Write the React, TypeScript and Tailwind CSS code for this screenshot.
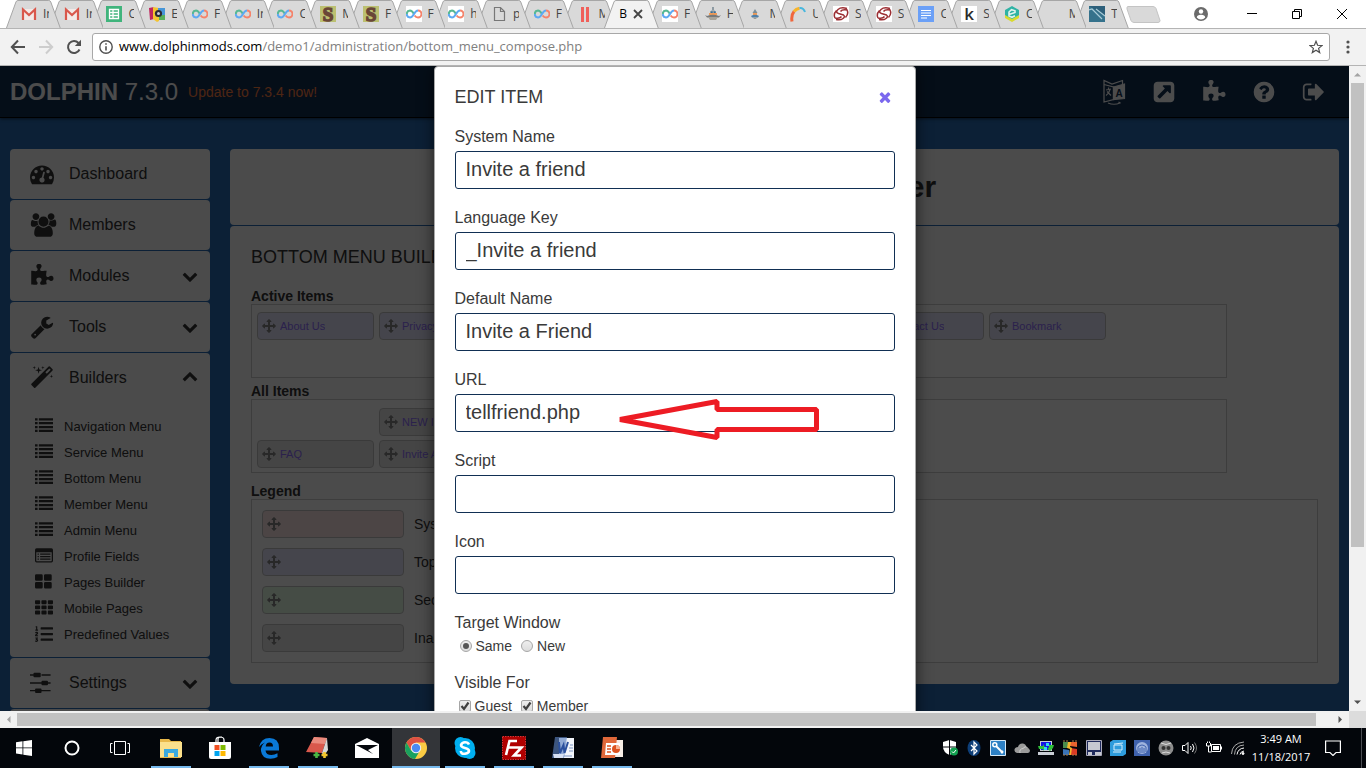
import { useState } from "react";
import type { ReactNode } from "react";
import { FaListOl } from "react-icons/fa";

/* ---------- icon paths (1792 unit grid) ---------- */

const PATHS = {
  tachometer:
    "M384 1152q0-53-37.5-90.5t-90.5-37.5-90.5 37.5-37.5 90.5 37.5 90.5 90.5 37.5 90.5-37.5 37.5-90.5zm192-448q0-53-37.5-90.5t-90.5-37.5-90.5 37.5-37.5 90.5 37.5 90.5 90.5 37.5 90.5-37.5 37.5-90.5zm428 481l101-382q6-26-7.5-48.5t-38.5-29.5-48 6.5-30 39.5l-101 382q-60 5-107 43.5t-63 98.5q-20 77 20 146t117 89 146-20 89-117q16-60-6-117t-72-91zm660-33q0-53-37.5-90.5t-90.5-37.5-90.5 37.5-37.5 90.5 37.5 90.5 90.5 37.5 90.5-37.5 37.5-90.5zm-640-640q0-53-37.5-90.5t-90.5-37.5-90.5 37.5-37.5 90.5 37.5 90.5 90.5 37.5 90.5-37.5 37.5-90.5zm448 192q0-53-37.5-90.5t-90.5-37.5-90.5 37.5-37.5 90.5 37.5 90.5 90.5 37.5 90.5-37.5 37.5-90.5zm320 448q0 261-141 483-19 29-54 29h-1402q-35 0-54-29-141-221-141-483 0-182 71-348t191-286 286-191 348-71 348 71 286 191 191 286 71 348z",
  users:
    "M657 896q-162 5-265 128h-134q-82 0-138-40.5t-56-118.5q0-353 124-353 6 0 43.5 21t97.5 42.5 119 21.5q67 0 133-23-5 37-5 66 0 159 93 293zm1071 637q0 120-73 189.5t-194 69.5h-874q-121 0-194-69.5t-73-189.5q0-53 3.5-103.5t14-109 26.5-108.5 43-97.5 62-81 85.5-53.5 111.5-20q10 0 43 21.5t73 48 107 48 135 21.5 135-21.5 107-48 73-48 43-21.5q61 0 111.5 20t85.5 53.5 62 81 43 97.5 26.5 108.5 14 109 3.5 103.5zm-1024-1277q0 106-75 181t-181 75-181-75-75-181 75-181 181-75 181 75 75 181zm704 384q0 159-112.5 271.5t-271.5 112.5-271.5-112.5-112.5-271.5 112.5-271.5 271.5-112.5 271.5 112.5 112.5 271.5zm576 225q0 78-56 118.5t-138 40.5h-134q-103-123-265-128 93-134 93-293 0-29-5-66 66 23 133 23 59 0 119-21.5t97.5-42.5 43.5-21q124 0 124 353zm-128-609q0 106-75 181t-181 75-181-75-75-181 75-181 181-75 181 75 75 181z",
  puzzle:
    "M1755 1083q0 81-44.5 135t-123.5 54q-41 0-77.5-17.5t-59-38-56.5-38-71-17.5q-110 0-110 124 0 39 16 115t15 115v5q-22 0-33 1-34 3-97.5 11.5t-115.5 13.5-98 5q-61 0-103-26.5t-42-83.5q0-37 17.5-71t38-56.5 38-59 17.5-77.5q0-79-54-123.5t-135-44.5q-84 0-143 45.5t-59 127.5q0 43 15 83t33.5 64.5 33.5 53 15 50.5q0 45-46 89-37 35-117 35-95 0-245-24-9-2-27.5-4t-27.5-4l-13-2q-1 0-3-1-2 0-2-1v-1024q2 1 17.5 3.5t34 5 21.5 3.5q150 24 245 24 80 0 117-35 46-44 46-89 0-22-15-50.5t-33.5-53-33.5-64.5-15-83q0-82 59-127.5t144-45.5q80 0 134 44.5t54 123.5q0 41-17.5 77.5t-38 59-38 56.5-17.5 71q0 57 42 83.5t103 26.5q64 0 180-15t163-17v2q-1 2-3.5 17.5t-5 34-3.5 21.5q-24 150-24 245 0 80 35 117 44 46 89 46 22 0 50.5-15t53-33.5 64.5-33.5 83-15q82 0 127.5 59t45.5 143z",
  wrench:
    "M448 1472q0-26-19-45t-45-19-45 19-19 45 19 45 45 19 45-19 19-45zm644-420l-682 682q-37 37-90 37-52 0-91-37l-106-108q-38-36-38-90 0-53 38-91l681-681q39 98 114.5 173.5t173.5 114.5zm634-435q0 39-23 106-47 134-164.5 217.5t-258.5 83.5q-185 0-316.5-131.5t-131.5-316.5 131.5-316.5 316.5-131.5q58 0 121.5 16.5t107.5 46.5q16 11 16 28t-16 28l-293 169v224l193 107q5-3 79-48.5t135.5-81 70.5-35.5q15 0 23.5 10t8.5 25z",
  magic:
    "M1254 581l293-293-107-107-293 293zm447-293q0 27-18 45l-1286 1286q-18 18-45 18t-45-18l-198-198q-18-18-18-45t18-45l1286-1286q18-18 45-18t45 18l198 198q18 18 18 45zm-1351-190l98 30-98 30-30 98-30-98-98-30 98-30 30-98zm350 162l196 60-196 60-60 196-60-196-196-60 196-60 60-196zm930 478l98 30-98 30-30 98-30-98-98-30 98-30 30-98zm-640-640l98 30-98 30-30 98-30-98-98-30 98-30 30-98z",
  sliders:
    "M0 240h260v110h-260zM860 240h676v110h-676zM330 128h400q70 0 70 60v214q0 60-70 60h-400q-70 0-70-60v-214q0-60 70-60zM0 841h860v110h-860zM1340 841h196v110h-196zM930 726h340q70 0 70 60v214q0 60-70 60h-340q-70 0-70-60v-214q0-60 70-60zM0 1410h380v110h-380zM860 1410h676v110h-676zM450 1310h340q70 0 70 60v214q0 60-70 60h-340q-70 0-70-60v-214q0-60 70-60z",
  chevronDown:
    "M1683 808l-742 741q-19 19-45 19t-45-19l-742-741q-19-19-19-45.5t19-45.5l166-165q19-19 45-19t45 19l531 531 531-531q19-19 45-19t45 19l166 165q19 19 19 45.5t-19 45.5z",
  arrows:
    "M1792 896q0 26-19 45l-256 256q-19 19-45 19t-45-19-19-45v-128h-384v384h128q26 0 45 19t19 45-19 45l-256 256q-19 19-45 19t-45-19l-256-256q-19-19-19-45t19-45 45-19h128v-384h-384v128q0 26-19 45t-45 19-45-19l-256-256q-19-19-19-45t19-45l256-256q19-19 45-19t45 19 19 45v128h384v-384h-128q-26 0-45-19t-19-45 19-45l256-256q19-19 45-19t45 19l256 256q19 19 19 45t-19 45-45 19h-128v384h384v-128q0-26 19-45t45-19 45 19l256 256q19 19 19 45z",
  times:
    "M1490 1322q0 40-28 68l-136 136q-28 28-68 28t-68-28l-294-294-294 294q-28 28-68 28t-68-28l-136-136q-28-28-28-68t28-68l294-294-294-294q-28-28-28-68t28-68l136-136q28-28 68-28t68 28l294 294 294-294q28-28 68-28t68 28l136 136q28 28 28 68t-28 68l-294 294 294 294q28 28 28 68z",
  question:
    "M1024 1376v-192q0-14-9-23t-23-9h-192q-14 0-23 9t-9 23v192q0 14 9 23t23 9h192q14 0 23-9t9-23zm256-672q0-88-55.5-163t-138.5-116-170-41q-243 0-371 213-15 24 8 42l132 100q7 6 19 6 16 0 25-12 53-68 86-92 34-24 86-24 48 0 85.5 26t37.5 59q0 38-20 61t-68 45q-63 28-115.5 86.5t-52.5 125.5v36q0 14 9 23t23 9h192q14 0 23-9t9-23q0-19 21.5-49.5t54.5-49.5q32-18 49-28.5t46-35 44.5-48 28-60.5 12.5-81zm384 192q0 209-103 385.5t-279.5 279.5-385.5 103-385.5-103-279.5-279.5-103-385.5 103-385.5 279.5-279.5 385.5-103 385.5 103 279.5 279.5 103 385.5z",
  external:
    "M1408 928v-480q0-26-19-45t-45-19h-480q-42 0-59 39-17 41 14 70l144 144-534 534q-19 19-19 45t19 45l102 102q19 19 45 19t45-19l534-534 144 144q18 19 45 19 12 0 25-5 39-17 39-59zm256-512v960q0 119-84.5 203.5t-203.5 84.5h-960q-119 0-203.5-84.5t-84.5-203.5v-960q0-119 84.5-203.5t203.5-84.5h960q119 0 203.5 84.5t84.5 203.5z",
  signOut:
    "M704 1440q0 4 1 20t.5 26.5-3 23.5-10 19.5-20.5 6.5h-320q-119 0-203.5-84.5t-84.5-203.5v-704q0-119 84.5-203.5t203.5-84.5h320q13 0 22.5 9.5t9.5 22.5q0 4 1 20t.5 26.5-3 23.5-10 19.5-20.5 6.5h-320q-66 0-113 47t-47 113v704q0 66 47 113t113 47h312l11.5 1 11.5 3 8 5.5 7 9 2 13.5zm928-544q0 26-19 45l-544 544q-19 19-45 19t-45-19-19-45v-288h-448q-26 0-45-19t-19-45v-384q0-26 19-45t45-19h448v-288q0-26 19-45t45-19 45 19l544 544q19 19 19 45z",
  list: "M0 128h256v220h-256zM0 510h256v220h-256zM0 892h256v220h-256zM0 1274h256v220h-256zM384 128h1408v220h-1408zM384 510h1408v220h-1408zM384 892h1408v220h-1408zM384 1274h1408v220h-1408z",
  listAlt:
    "M160 128h1472q160 0 160 160v1088q0 160-160 160h-1472q-160 0-160-160v-1088q0-160 160-160zM128 512v864q0 32 32 32h1472q32 0 32-32v-864zM256 640h128v128h-128zM256 896h128v128h-128zM256 1152h128v128h-128zM512 640h1024v128h-1024zM512 896h1024v128h-1024zM512 1152h1024v128h-1024z",
  thLarge:
    "M128 128h512q128 0 128 128v384q0 128-128 128h-512q-128 0-128-128v-384q0-128 128-128zM1024 128h512q128 0 128 128v384q0 128-128 128h-512q-128 0-128-128v-384q0-128 128-128zM128 896h512q128 0 128 128v384q0 128-128 128h-512q-128 0-128-128v-384q0-128 128-128zM1024 896h512q128 0 128 128v384q0 128-128 128h-512q-128 0-128-128v-384q0-128 128-128z",
  th: "M80 128h352q80 0 80 80v224q0 80-80 80h-352q-80 0-80-80v-224q0-80 80-80zM720 128h352q80 0 80 80v224q0 80-80 80h-352q-80 0-80-80v-224q0-80 80-80zM1360 128h352q80 0 80 80v224q0 80-80 80h-352q-80 0-80-80v-224q0-80 80-80zM80 640h352q80 0 80 80v224q0 80-80 80h-352q-80 0-80-80v-224q0-80 80-80zM720 640h352q80 0 80 80v224q0 80-80 80h-352q-80 0-80-80v-224q0-80 80-80zM1360 640h352q80 0 80 80v224q0 80-80 80h-352q-80 0-80-80v-224q0-80 80-80zM80 1152h352q80 0 80 80v224q0 80-80 80h-352q-80 0-80-80v-224q0-80 80-80zM720 1152h352q80 0 80 80v224q0 80-80 80h-352q-80 0-80-80v-224q0-80 80-80zM1360 1152h352q80 0 80 80v224q0 80-80 80h-352q-80 0-80-80v-224q0-80 80-80z",
};

type IconName = keyof typeof PATHS;

function Icon({ name, className }: { name: IconName; className: string }) {
  return (
    <svg
      viewBox={name === "users" ? "0 0 2048 1792" : "0 0 1792 1792"}
      className={`shrink-0 ${className}`}
      fill="currentColor"
      fillRule={name === "listAlt" ? "evenodd" : "nonzero"}
      aria-hidden="true"
    >
      <path d={PATHS[name]} />
    </svg>
  );
}

function LanguageIcon() {
  return (
    <svg viewBox="0 0 24 26" className="h-[26px] w-6" fill="none" stroke="currentColor" strokeWidth="1.2" aria-hidden="true">
      <path d="M2 5.500L11.500 8v12.500L2 23zM2 5.500v-4l8 3.500L20.500 1.500v4" />
      <path d="M11.500 8L22.500 5v14.500L11.500 20.500z" fill="currentColor" />
      <path d="M4 11l5-1M6.500 8.500v2M8 10.500q-1 4-4 6M5 12.500l4 4M6 24q6 2.500 12 0l-1.500-1" />
      <text x="13.500" y="17.500" fontSize="10" fontWeight="bold" stroke="none" fill="#112f53" fontFamily="Liberation Sans, sans-serif">
        A
      </text>
    </svg>
  );
}

/* ---------- browser tabs ---------- */

type Favicon =
  | "gmail"
  | "sheets"
  | "camera"
  | "loop"
  | "loopWhite"
  | "serif"
  | "file"
  | "bars"
  | "boat"
  | "boatSmall"
  | "arc"
  | "swirl"
  | "docs"
  | "k"
  | "hex"
  | "teal"
  | "none";

const TABS: { icon: Favicon; title: string; active?: boolean }[] = [
  { icon: "gmail", title: "In" },
  { icon: "gmail", title: "In" },
  { icon: "sheets", title: "C" },
  { icon: "camera", title: "E" },
  { icon: "loop", title: "F" },
  { icon: "loop", title: "In" },
  { icon: "loop", title: "C" },
  { icon: "serif", title: "M" },
  { icon: "serif", title: "F" },
  { icon: "loopWhite", title: "F" },
  { icon: "loopWhite", title: "h" },
  { icon: "file", title: "p" },
  { icon: "loop", title: "F" },
  { icon: "bars", title: "M" },
  { icon: "none", title: "B", active: true },
  { icon: "loopWhite", title: "F" },
  { icon: "boat", title: "H" },
  { icon: "boatSmall", title: "M" },
  { icon: "arc", title: "U" },
  { icon: "swirl", title: "S" },
  { icon: "swirl", title: "S" },
  { icon: "docs", title: "C" },
  { icon: "k", title: "S" },
  { icon: "hex", title: "C" },
  { icon: "none", title: "M" },
  { icon: "teal", title: "T" },
];

function Loop() {
  return (
    <g fill="none" strokeWidth="2">
      <path d="M8 8Q6 4.500 4 4.500A3.500 3.500 0 0 0 .8 8" stroke="#57b894" />
      <path d="M.8 8A3.500 3.500 0 0 0 4 11.500Q6 11.500 8 8Q10 4.500 12 4.500" stroke="#5ea9f2" />
      <path d="M12 4.500A3.500 3.500 0 0 1 12 11.500Q10 11.500 8.600 9.500" stroke="#f5836b" />
    </g>
  );
}

const FAVICONS: Record<Favicon, ReactNode> = {
  gmail: (
    <g>
      <path d="M1 3h14v11H1z" fill="#f3e9e7" />
      <path d="M2 14V3.500l6 5.500 6-5.500V14" fill="none" stroke="#d9574b" strokeWidth="2.200" />
    </g>
  ),
  sheets: (
    <g>
      <path d="M0 0h16v16H0z" fill="#40b47c" />
      <path d="M3.500 3.500h9v9h-9zM3.500 6.500h9M3.500 9.500h9M7 3.500v9" fill="none" stroke="#fff" strokeWidth="1.300" />
    </g>
  ),
  camera: (
    <g>
      <path d="M0 2l5-1v12l-4 1z" fill="#c0265c" />
      <path d="M4 1l6 1v13l-2 1-4-3z" fill="#f4c430" />
      <path d="M9 2h7v7H9z" fill="#4796d8" />
      <path d="M10 9h6v5h-6z" fill="#57b05a" />
      <circle cx="9.500" cy="7.500" r="3.600" fill="#2b2b35" />
      <circle cx="9.500" cy="7.500" r="1.500" fill="#c9ccd8" />
    </g>
  ),
  loop: <Loop />,
  loopWhite: (
    <g>
      <path d="M0 0h16v16H0z" fill="#fff" />
      <Loop />
    </g>
  ),
  serif: (
    <g>
      <path d="M0 0h16v16H0z" fill="#bcc071" />
      <text x="8" y="14.500" textAnchor="middle" fontSize="19" fontWeight="bold" fill="#6a4637" stroke="#6a4637" strokeWidth="1.500" fontFamily="Liberation Serif, serif">
        S
      </text>
    </g>
  ),
  file: <path d="M3.500 1.500h6l4 4v9h-10zM9.500 1.500v4h4" fill="none" stroke="#777" strokeWidth="1.200" />,
  bars: <path d="M4 1h3v15H4zM9 1h3v15H9z" fill="#f0605a" />,
  boat: (
    <g>
      <path d="M7.300 1h1.400v3H7.300z" fill="#6d7f8a" />
      <path d="M5 5.500q3-2.500 6 0V7H5z" fill="#8a979e" />
      <path d="M4 7h8v2H4z" fill="#ef9a56" />
      <path d="M2 10q6-2.500 12 0l2-1-2 2.500H2L0 9z" fill="#77797a" />
      <path d="M3 11h10l-2 3H5z" fill="#a8a49a" />
      <path d="M6 5.500h1.500V7H6zM9 5.500h1.500V7H9z" fill="#2f6fa0" />
    </g>
  ),
  boatSmall: (
    <g>
      <path d="M8 3l2.500 4h-5z" fill="#7c8e98" />
      <path d="M6 7h4v2H6z" fill="#ef9a56" />
      <path d="M4 10q4-2.500 8 0l-1 1.500H5z" fill="#4f7fa8" />
      <path d="M6 11.500h4L9 13H7z" fill="#9a9a94" />
    </g>
  ),
  arc: (
    <g fill="none" strokeWidth="3">
      <path d="M2 15.500Q1 9 4 5.500" stroke="#f0663c" />
      <path d="M4 5.500Q6 2.800 9.500 2.200" stroke="#f7b42c" />
      <path d="M9.500 2Q13.500 1.500 15 6" stroke="#48b7de" strokeWidth="2" />
    </g>
  ),
  swirl: (
    <g>
      <path d="M0 0h16v16H0z" fill="#fff" />
      <path
        d="M14 2.500Q8 .8 5 3.500T5.500 7.500L10.500 9Q12.500 10.500 10 12.500T3 13.500M14.500 4Q9 3 7.500 5.500M2 12Q7 13 8.500 10.500M3.500 4.500Q0 8 2 12M12.500 11.500Q16 8 14 4"
        fill="none"
        stroke="#9c2f34"
        strokeWidth="1.500"
      />
    </g>
  ),
  docs: (
    <g>
      <path d="M0 0h16v16H0z" fill="#6ba0f7" />
      <path d="M3 4.500h10M3 7h10M3 9.500h10M3 12h6" stroke="#fff" strokeWidth="1.200" />
    </g>
  ),
  k: (
    <g>
      <path d="M0 0h16v16H0z" fill="#fff" />
      <text x="8" y="14" textAnchor="middle" fontSize="17" fontWeight="600" fill="#2b2b2b" fontFamily="Open Sans, sans-serif">
        k
      </text>
    </g>
  ),
  hex: (
    <g>
      <path d="M1 4l7-4 7 4v6L8 14 1 10z" fill="#2fb3a5" />
      <path d="M1 9l7 4 7-4v3l-7 4-7-4z" fill="#d9da2e" />
      <path d="M5 8.500l6-2V4.800L7.500 3.700 5 6v4l3 1.300 3-1.500" fill="none" stroke="#e2f3ee" strokeWidth="1.600" />
    </g>
  ),
  teal: (
    <g>
      <path d="M0 0h16v16H0z" fill="#35728c" />
      <path d="M0 0h16v10z" fill="#2c5f7a" />
      <path d="M0 4l3-1 10 10M7 3l9 7" fill="none" stroke="#a8cbd8" strokeWidth="1.200" />
    </g>
  ),
  none: null,
};

function TabStrip() {
  return (
    <nav aria-label="Tabs" className="flex h-7 min-w-0 flex-1 pl-[6px]">
      {TABS.map((tab, i) => (
        <div key={i} className="relative min-w-0 flex-1" style={{ zIndex: tab.active ? 40 : 30 - i }}>
          <svg viewBox="0 0 55 28" preserveAspectRatio="none" className="absolute top-0 left-0 h-7 w-[calc(100%+12px)]" aria-hidden="true">
            <path
              d="M.5 28L10 2Q10.500.5 12 .5H43Q44.500.5 45 2L54.500 28"
              fill={tab.active ? "#f2f2f2" : "#d9d9d9"}
              stroke="#a6a6a6"
            />
          </svg>
          <div className="relative flex h-7 items-center gap-[6px] pl-[15px]">
            {tab.active ? (
              <>
                <span className="w-2 text-xs text-black">{tab.title}</span>
                <button type="button" aria-label="Close tab" className="shrink-0">
                  <svg viewBox="0 0 10 10" className="size-[10px]" stroke="#444" strokeWidth="1.800">
                    <path d="M1 1l8 8M9 1L1 9" />
                  </svg>
                </button>
              </>
            ) : (
              <>
                <svg viewBox="0 0 16 16" className="size-4 shrink-0" aria-hidden="true">
                  {FAVICONS[tab.icon]}
                </svg>
                <span className="w-[6px] shrink-0 overflow-hidden text-xs text-[#444]">{tab.title}</span>
              </>
            )}
          </div>
        </div>
      ))}
    </nav>
  );
}

function BrowserChrome() {
  return (
    <header className="shrink-0 bg-white font-['Open_Sans','Noto_Sans',sans-serif]">
      <div className="flex h-7 items-stretch">
        <TabStrip />
        <div className="flex w-[249px] shrink-0 items-center justify-between pr-[2px] pl-[9px]">
          <button type="button" aria-label="New tab">
            <svg viewBox="0 0 35 17" className="h-[17px] w-[35px]">
              <path d="M2 .5h25q2 0 3 2l4 12q0 2-2 2H8q-2 0-3-2L1 3Q.5.500 2 .5z" fill="#d9d9d9" stroke="#c4c4c4" />
            </svg>
          </button>
          <div className="flex items-center">
            <button type="button" aria-label="Profile" className="flex w-[56px] justify-center">
              <svg viewBox="0 0 14 14" className="size-[14px]">
                <circle cx="7" cy="7" r="7" fill="#6b6b6b" />
                <circle cx="7" cy="4.500" r="2.200" fill="#fff" />
                <path d="M2.800 10.500Q3 7.800 7 7.800t4.200 2.700Q9.500 12.600 7 12.600t-4.200-2.100z" fill="#fff" />
              </svg>
            </button>
            <button type="button" aria-label="Minimize" className="flex w-[45px] justify-center">
              <svg viewBox="0 0 10 10" className="size-[10px]" stroke="#000">
                <path d="M0 4.500h10" />
              </svg>
            </button>
            <button type="button" aria-label="Restore" className="flex w-[45px] justify-center">
              <svg viewBox="0 0 10 10" className="size-[10px]" fill="none" stroke="#000">
                <path d="M.5 2.500h7v7h-7zM2.500 2.500v-2h7v7h-2" />
              </svg>
            </button>
            <button type="button" aria-label="Close" className="flex w-[45px] justify-center">
              <svg viewBox="0 0 10 10" className="size-[10px]" stroke="#000">
                <path d="M0 0l10 10M10 0L0 10" />
              </svg>
            </button>
          </div>
        </div>
      </div>

      <div className="flex h-[38px] items-center border-t border-b border-[#b4b4b4] bg-[#f2f2f2]">
        <div className="flex w-[92px] shrink-0 items-center gap-3 pl-[10px]">
          <button type="button" aria-label="Back">
            <svg viewBox="0 0 16 16" className="size-4" fill="none" stroke="#505050" strokeWidth="2">
              <path d="M15 8H2M8 1.500L1.800 8 8 14.500" />
            </svg>
          </button>
          <button type="button" aria-label="Forward">
            <svg viewBox="0 0 16 16" className="size-4" fill="none" stroke="#cdcdcd" strokeWidth="2">
              <path d="M1 8h13M8 1.500L14.200 8 8 14.500" />
            </svg>
          </button>
          <button type="button" aria-label="Reload">
            <svg viewBox="0 0 16 16" className="size-4" fill="none" stroke="#505050" strokeWidth="2">
              <path d="M13.500 10.500A6 6 0 1 1 12.500 4L14 5.500" />
              <path d="M15 .8v6.200H8.800z" fill="#505050" stroke="none" />
            </svg>
          </button>
        </div>
        <div className="flex h-7 min-w-0 flex-1 items-center rounded-[3px] border border-[#a8a8a8] bg-white px-[6px]">
          <svg viewBox="0 0 14 14" className="size-[14px] shrink-0" fill="none" stroke="#505050" strokeWidth="1.400" aria-hidden="true">
            <circle cx="7" cy="7" r="6.200" />
            <path d="M7 6.200v4.300M7 3.200v1.600" strokeWidth="1.600" />
          </svg>
          <p className="min-w-0 flex-1 truncate pl-[6px] text-[13px] text-[#808080]">
            <span className="text-black">www.dolphinmods.com</span>
            /demo1/administration/bottom_menu_compose.php
          </p>
          <button type="button" aria-label="Bookmark this page">
            <svg viewBox="0 0 14 14" className="size-[14px]" fill="none" stroke="#505050" strokeWidth="1.200">
              <path d="M7 1.300l1.600 4 4.300.3-3.300 2.800 1.100 4.200L7 10.300l-3.700 2.300 1.100-4.200L1.100 5.600l4.300-.3z" />
            </svg>
          </button>
        </div>
        <button type="button" aria-label="Menu" className="flex w-9 shrink-0 justify-center">
          <svg viewBox="0 0 4 14" className="h-[14px] w-1" fill="#505050">
            <circle cx="2" cy="2" r="1.600" />
            <circle cx="2" cy="7" r="1.600" />
            <circle cx="2" cy="12" r="1.600" />
          </svg>
        </button>
      </div>
    </header>
  );
}

/* ---------- administration page ---------- */

const BUILDER_LINKS: { label: string; icon: IconName | "listOl" }[] = [
  { label: "Navigation Menu", icon: "list" },
  { label: "Service Menu", icon: "list" },
  { label: "Bottom Menu", icon: "list" },
  { label: "Member Menu", icon: "list" },
  { label: "Admin Menu", icon: "list" },
  { label: "Profile Fields", icon: "listAlt" },
  { label: "Pages Builder", icon: "thLarge" },
  { label: "Mobile Pages", icon: "th" },
  { label: "Predefined Values", icon: "listOl" },
];

function SideItem({
  icon,
  label,
  arrow,
  children,
}: {
  icon: IconName;
  label: string;
  arrow?: "up" | "down";
  children?: ReactNode;
}) {
  return (
    <li className="shrink-0 rounded bg-[#fafafa]">
      <a href="#" className="flex h-[50px] items-center pr-[12px] pl-5">
        <span className="w-[39px]">
          <Icon name={icon} className={icon === "users" ? "h-6 w-[27px]" : "size-6"} />
        </span>
        <span className="flex-1 text-base">{label}</span>
        {arrow && <Icon name="chevronDown" className={arrow === "up" ? "size-4 rotate-180" : "size-4"} />}
      </a>
      {children}
    </li>
  );
}

function Sidebar() {
  return (
    <ul className="flex w-[200px] shrink-0 flex-col gap-px">
      <SideItem icon="tachometer" label="Dashboard" />
      <SideItem icon="users" label="Members" />
      <SideItem icon="puzzle" label="Modules" arrow="down" />
      <SideItem icon="wrench" label="Tools" arrow="down" />
      <SideItem icon="magic" label="Builders" arrow="up">
        <ul className="py-[10px] pl-[25px]">
          {BUILDER_LINKS.map((link) => (
            <li key={link.label}>
              <a href="#" className="flex h-[26px] items-center gap-[11px] text-[13px]">
                {link.icon === "listOl" ? (
                  <FaListOl className="size-[18px]" />
                ) : (
                  <Icon name={link.icon} className="size-[18px]" />
                )}
                <span className="pt-[2px]">{link.label}</span>
              </a>
            </li>
          ))}
        </ul>
      </SideItem>
      <SideItem icon="sliders" label="Settings" arrow="down" />
      <SideItem icon="tachometer" label="Dashboard" />
    </ul>
  );
}

function Chip({ label, active }: { label: string; active?: boolean }) {
  return (
    <div
      className={`flex h-7 w-[117px] shrink-0 items-center gap-1 rounded border border-[#c4c4c4] px-1 text-[11px] text-[#9070ff] ${
        active ? "bg-[#e6e6ff]" : "bg-[#e6e6e6]"
      }`}
    >
      <Icon name="arrows" className="size-[14px] text-[#888]" />
      <span className="truncate">{label}</span>
    </div>
  );
}

const ACTIVE_ITEMS = ["About Us", "Privacy", "Terms", "FAQ", "Invite a friend", "Contact Us", "Bookmark"];

const LEGEND = [
  { label: "System", color: "bg-[#ffe6e6]" },
  { label: "Top", color: "bg-[#e6e6ff]" },
  { label: "Second", color: "bg-[#e6ffe6]" },
  { label: "Inactive", color: "bg-[#e6e6e6]" },
];

function Content() {
  return (
    <main className="min-w-0 flex-1">
      <h1 className="flex h-[76px] items-center justify-center rounded bg-[#fafafa] text-3xl font-bold">
        Bottom Menu Builder
      </h1>
      <section className="mt-px rounded bg-[#fafafa] px-[21px] pt-[19px] pb-[21px]">
        <h2 className="text-lg leading-6">BOTTOM MENU BUILDER</h2>

        <h3 className="mt-[19px] text-sm leading-4 font-bold">Active Items</h3>
        <div className="mr-[91px] flex h-[74px] gap-[5px] overflow-hidden border border-[#ccc] bg-white px-[5px] pt-[7px]">
          {ACTIVE_ITEMS.map((item) => (
            <Chip key={item} label={item} active />
          ))}
        </div>

        <h3 className="mt-[5px] text-sm leading-4 font-bold">All Items</h3>
        <div className="mr-[91px] flex h-[74px] flex-wrap content-start gap-x-[5px] gap-y-1 overflow-hidden border border-[#ccc] bg-white px-[5px] pt-2">
          <div className="w-[117px]" />
          <Chip label="NEW ITEM" />
          <div className="w-[600px]" />
          <Chip label="FAQ" />
          <Chip label="Invite A" />
        </div>

        <h3 className="mt-[10px] text-sm leading-4 font-bold">Legend</h3>
        <ul className="flex flex-col gap-[10px] border border-[#ccc] bg-white py-[10px] pl-[10px]">
          {LEGEND.map((row) => (
            <li key={row.label} className="flex items-center gap-[10px] text-sm">
              <span className={`flex h-7 w-[142px] items-center rounded border border-[#c4c4c4] px-1 ${row.color}`}>
                <Icon name="arrows" className="size-[14px] text-[#888]" />
              </span>
              {row.label}
            </li>
          ))}
        </ul>
      </section>
    </main>
  );
}

function AdminPage() {
  return (
    <div className="absolute inset-0 overflow-hidden bg-[#286bb4] text-[#333]">
      <div className="flex h-[52px] items-center border-b border-black bg-[#112f53] pr-[23px] pl-[10px] text-white shadow-[0_1px_3px_rgba(0,0,0,0.5)]">
        <a href="#" className="text-2xl">
          <b>DOLPHIN</b> 7.3.0
        </a>
        <a href="#" className="ml-[10px] text-sm text-[#ff7f40]">
          Update to 7.3.4 now!
        </a>
        <div className="ml-auto flex items-center gap-[26px]">
          <a href="#" aria-label="Language">
            <LanguageIcon />
          </a>
          <a href="#" aria-label="Open site">
            <Icon name="external" className="size-6" />
          </a>
          <a href="#" aria-label="Extensions">
            <Icon name="puzzle" className="size-6" />
          </a>
          <a href="#" aria-label="Help">
            <Icon name="question" className="size-6" />
          </a>
          <a href="#" aria-label="Log out">
            <Icon name="signOut" className="size-6" />
          </a>
        </div>
      </div>
      <div className="flex items-start gap-5 px-[10px] pt-[31px]">
        <Sidebar />
        <Content />
      </div>
    </div>
  );
}

/* ---------- edit dialog ---------- */

const FIELDS = [
  { id: "system", label: "System Name", value: "Invite a friend" },
  { id: "key", label: "Language Key", value: "_Invite a friend" },
  { id: "default", label: "Default Name", value: "Invite a Friend" },
  { id: "url", label: "URL", value: "tellfriend.php" },
  { id: "script", label: "Script", value: "" },
  { id: "icon", label: "Icon", value: "" },
];

function RedArrow() {
  return (
    <svg
      viewBox="0 0 206 44"
      className="pointer-events-none absolute top-1 left-[161px] h-11 w-[206px]"
      fill="none"
      stroke="#ed1c24"
      strokeWidth="5"
      aria-hidden="true"
    >
      <path d="M4 21.500L101 3.500V11.500h99.500v20H101v8z" strokeLinejoin="bevel" />
    </svg>
  );
}

const TICK =
  "size-3 appearance-none border border-[#a6a6a6] bg-linear-to-b from-[#eee] to-[#dcdcdc]";

function EditDialog() {
  const [values, setValues] = useState<Record<string, string>>(
    Object.fromEntries(FIELDS.map((f) => [f.id, f.value])),
  );
  const [target, setTarget] = useState("Same");
  const [visible, setVisible] = useState<string[]>(["Guest", "Member"]);

  return (
    <div className="absolute inset-0 flex items-start justify-center overflow-hidden bg-black/70">
      <div
        role="dialog"
        aria-label="Edit item"
        className="w-[482px] shrink-0 rounded border border-[#a9a9a9] bg-white px-5 pt-[19px] pb-5 text-[#3a3a3a] shadow-[0_0_16px_rgba(0,0,0,0.6)]"
      >
        <div className="mb-4 flex h-[22px] items-center justify-between pr-[2px]">
          <h2 className="text-lg leading-[22px]">EDIT ITEM</h2>
          <button type="button" aria-label="Close dialog">
            <Icon name="times" className="size-4 text-[#7b68ee]" />
          </button>
        </div>

        {FIELDS.map((field) => (
          <div key={field.id} className="mb-4">
            <label htmlFor={field.id} className="mb-px block text-base leading-[26px]">
              {field.label}
            </label>
            <div className="relative">
              <input
                id={field.id}
                type="text"
                value={values[field.id]}
                onChange={(e) => setValues({ ...values, [field.id]: e.target.value })}
                className="block h-[38px] w-full rounded-[3px] border border-[#112f53] bg-white px-[10px] pb-[2px] text-xl outline-none"
              />
              {field.id === "url" && <RedArrow />}
            </div>
          </div>
        ))}

        <fieldset className="mb-[14px]">
          <legend className="text-base leading-[26px]">Target Window</legend>
          <div className="flex h-5 items-center gap-[9px] pl-[5px] text-sm">
            {["Same", "New"].map((name) => (
              <label key={name} className="flex items-center gap-1">
                <span className="relative flex">
                  <input
                    type="radio"
                    name="target"
                    checked={target === name}
                    onChange={() => setTarget(name)}
                    className={`${TICK} rounded-full`}
                  />
                  {target === name && (
                    <span className="pointer-events-none absolute inset-[3px] rounded-full bg-[#555]" />
                  )}
                </span>
                {name}
              </label>
            ))}
          </div>
        </fieldset>

        <fieldset>
          <legend className="text-base leading-[26px]">Visible For</legend>
          <div className="flex h-5 items-center gap-[9px] pl-1 text-sm">
            {["Guest", "Member"].map((name) => (
              <label key={name} className="flex items-center gap-1">
                <span className="relative flex">
                  <input
                    type="checkbox"
                    checked={visible.includes(name)}
                    onChange={() =>
                      setVisible(
                        visible.includes(name) ? visible.filter((v) => v !== name) : [...visible, name],
                      )
                    }
                    className={`${TICK} rounded-[2px]`}
                  />
                  {visible.includes(name) && (
                    <svg
                      viewBox="0 0 12 12"
                      className="pointer-events-none absolute inset-0 size-3"
                      fill="none"
                      stroke="#404040"
                      strokeWidth="2.200"
                    >
                      <path d="M2.500 6l2.500 3 4.500-6.500" />
                    </svg>
                  )}
                </span>
                {name}
              </label>
            ))}
          </div>
        </fieldset>
      </div>
    </div>
  );
}

function Triangle({ className }: { className: string }) {
  return (
    <svg viewBox="0 0 17 17" className={`size-[17px] shrink-0 ${className}`} fill="currentColor" aria-hidden="true">
      <path d="M5 10.500h7L8.500 7z" />
    </svg>
  );
}

function Viewport() {
  return (
    <div className="flex min-h-0 flex-1 flex-col">
      <div className="flex min-h-0 flex-1">
        <div className="relative min-w-0 flex-1 font-['Liberation_Sans',Arial,sans-serif]">
          <AdminPage />
          <EditDialog />
        </div>
        <div className="flex w-[17px] shrink-0 flex-col items-center bg-[#f1f1f1]">
          <Triangle className="text-[#a3a3a3]" />
          <div className="h-[72%] w-[13px] bg-[#c1c1c1]" />
          <Triangle className="mt-auto rotate-180 text-[#505050]" />
        </div>
      </div>
      <div className="flex h-[17px] shrink-0 items-center bg-[#f1f1f1]">
        <Triangle className="-rotate-90 text-[#a3a3a3]" />
        <div className="mr-4 h-[13px] flex-1 bg-[#c1c1c1]" />
        <Triangle className="rotate-90 text-[#505050]" />
        <div className="size-[17px] shrink-0 bg-[#dcdcdc]" />
      </div>
    </div>
  );
}

/* ---------- taskbar ---------- */

const APPS: { name: string; state: "closed" | "open" | "focused"; art: ReactNode }[] = [
  {
    name: "File Explorer",
    state: "open",
    art: (
      <g>
        <path d="M1 3h9l2 2h10v17H1z" fill="#e8b84a" />
        <path d="M1 6h22v15H1z" fill="#fbe08c" />
        <path d="M5 21v-8h14v8h-4v-4H9v4z" fill="#3aa9df" />
      </g>
    ),
  },
  {
    name: "Store",
    state: "closed",
    art: (
      <g>
        <path d="M8 6V4q0-3 4-3t4 3v2M10 6V3q0-2 4-2" fill="none" stroke="#fff" strokeWidth="1.200" />
        <path d="M1 6h22v15q0 2-2 2H3q-2 0-2-2z" fill="#fff" />
        <path d="M6.500 9h5v5h-5z" fill="#f25022" />
        <path d="M12.500 9h5v5h-5z" fill="#7fba00" />
        <path d="M6.500 15h5v5h-5z" fill="#00a4ef" />
        <path d="M12.500 15h5v5h-5z" fill="#ffb900" />
      </g>
    ),
  },
  {
    name: "Edge",
    state: "open",
    art: (
      <path
        d="M2 11Q4 2 12.500 2 22 2 22 12v2.500H8.500q.5 4.500 6 4.500 3 0 6-1.700V21q-3 1.800-7 1.800Q5 22.800 4 15q-.5-5 4-8.500Q4.500 7.500 2 11zm6.700-.5H16Q16 6.500 12.500 6.500t-3.800 4z"
        fill="#0a79d8"
      />
    ),
  },
  {
    name: "Notes",
    state: "open",
    art: (
      <g>
        <path d="M8 1l13 1-5 15L0 16z" fill="#d9584c" />
        <path d="M8 1l13 1-2 6-14-1z" fill="#e98a7d" />
        <path d="M21 2l1 12-4 6-2-3z" fill="#d8d8d8" />
        <path d="M10.500 16v6M7.500 19h6" stroke="#4bb543" strokeWidth="2.600" />
        <path d="M18.500 16v6M15.500 19h6" stroke="#f2c62e" strokeWidth="2.600" />
      </g>
    ),
  },
  {
    name: "Mail",
    state: "closed",
    art: (
      <g>
        <path d="M0 8l12-6 12 6v14H0z" fill="#fff" />
        <path d="M1 9h22l-10 5 5 4z" fill="#05070c" />
      </g>
    ),
  },
  {
    name: "Chrome",
    state: "focused",
    art: (
      <g>
        <circle cx="12" cy="12" r="11" fill="#fbcb43" />
        <path d="M2.500 6.500A11 11 0 0 1 21.500 6.500H12l-5 8z" fill="#dd5144" />
        <path d="M2.500 6.500A11 11 0 0 0 11 23l5-8.500-9 0z" fill="#1aa15f" />
        <circle cx="12" cy="12" r="5.200" fill="#f1f1f1" />
        <circle cx="12" cy="12" r="4.200" fill="#4a8af4" />
      </g>
    ),
  },
  {
    name: "Skype",
    state: "open",
    art: (
      <g>
        <circle cx="12" cy="12" r="10" fill="#00aff0" />
        <circle cx="7.500" cy="7" r="6" fill="#00aff0" />
        <circle cx="16.500" cy="17" r="6" fill="#00aff0" />
        <path d="M16 8.500Q15 6.300 12 6.300T8 9q0 2 4 3t4 3-4 2.700T7.800 15" fill="none" stroke="#fff" strokeWidth="2.600" />
      </g>
    ),
  },
  {
    name: "FileZilla",
    state: "open",
    art: (
      <g>
        <path d="M.5.5h23v23H.5z" fill="#b00000" stroke="#d33" strokeDasharray="1.500 1" />
        <path d="M4 19L7.500 5H15M6 11.500h6M11 11.500h8.500L12 19.500h7" fill="none" stroke="#fff" strokeWidth="2.600" />
      </g>
    ),
  },
  {
    name: "Word",
    state: "open",
    art: (
      <g>
        <path d="M8 2h15v20H8z" fill="#f2f5fb" />
        <path d="M19 9h3M18 12h4M18 15h4M10 20h11" stroke="#7b93c4" strokeWidth="1.200" />
        <path d="M4 1h12l-3 21H1z" fill="#5b7fbf" opacity=".65" />
        <path d="M8 6l1 11 3.500-8 1 8L17 6" fill="none" stroke="#2a4f9d" strokeWidth="2" />
        <path d="M3 22h9l1-4H2z" fill="#d6e0f3" />
      </g>
    ),
  },
  {
    name: "PowerPoint",
    state: "open",
    art: (
      <g>
        <path d="M9 4h14v17H9z" fill="#f7ede6" />
        <path d="M3 1h14l-2 21H1z" fill="#e0683a" />
        <path d="M6 7h14v12H5z" fill="#fff" />
        <circle cx="16" cy="13" r="4" fill="#dd5320" />
        <path d="M16 13V9a4 4 0 0 1 4 4z" fill="#f6b394" />
        <path d="M7 10h4M7 13h4M7 16h4" stroke="#dd5320" strokeWidth="1.500" />
      </g>
    ),
  },
];

const TRAY: { name: string; art: ReactNode }[] = [
  {
    name: "Security",
    art: (
      <g>
        <path d="M7.500 0l6.500 2v5q0 5-6.500 8Q1 12 1 7V2z" fill="#fff" />
        <path d="M7.500 0v15M1 7h13" stroke="#05070c" />
        <circle cx="12" cy="11.500" r="4" fill="#12a150" />
        <path d="M10 11.500l1.500 1.500 2.500-3" stroke="#fff" fill="none" />
      </g>
    ),
  },
  {
    name: "Bluetooth",
    art: (
      <g>
        <ellipse cx="8" cy="8" rx="6.500" ry="8" fill="#0d3e78" />
        <path d="M5 5l6 6-3 3V2l3 3-6 6" fill="none" stroke="#fff" strokeWidth="1.200" />
      </g>
    ),
  },
  {
    name: "Key",
    art: (
      <g>
        <path d="M.5.5h15v15H.5z" fill="#2d80c4" stroke="#d6e8f5" />
        <path d="M6 6l7 7M11 13l2-2" stroke="#fff" strokeWidth="1.800" />
        <circle cx="4.800" cy="4.800" r="2" fill="none" stroke="#fff" strokeWidth="1.500" />
      </g>
    ),
  },
  {
    name: "Cloud",
    art: (
      <g>
        <path d="M3 13q-3-1-2.500-3.500T4 7q1-4 5-3.500 3 .5 3.500 4 3 .5 3.500 3 0 2-2 2.500z" fill="#9b9b9b" />
        <path d="M6 13q-1-4 3-4.500 2-3 4.500-1" fill="none" stroke="#cfcfcf" />
      </g>
    ),
  },
  {
    name: "Sync",
    art: (
      <g>
        <path d="M2 1h12v10H2zM0 12h16v3H0z" fill="#c9ced6" />
        <path d="M3 2h10v8H3z" fill="#1414e6" />
        <path d="M0 6h5V4l2 3.500L5 11V9H1zM16 5h-5v2l-1.500 2L12 11l3-3z" fill="#2fbf3a" />
        <path d="M8 3h3v3H8zM6 7h3v3H6z" fill="#2fd9ef" />
      </g>
    ),
  },
  {
    name: "Chip",
    art: (
      <g>
        <path d="M1 2h5v6H1z" fill="#4c8d4c" />
        <path d="M8 2h7v5l-7-1z" fill="#e9632f" />
        <path d="M1 9l6 1v5H1z" fill="#3a74b8" />
        <path d="M9 8l6 1v6H9z" fill="#d83a24" />
        <path d="M6 2h3l-1 5 2 1-1 7H7l1-6-3-1z" fill="#f2b52d" />
        <path d="M2 0v2M5 0v2M11 0v2M14 0v2M2 14v2M5 14v2M11 14v2M14 14v2" stroke="#a87a4a" />
      </g>
    ),
  },
  {
    name: "Display",
    art: (
      <g>
        <path d="M.5.5h15v15H.5z" fill="#1f2a5c" stroke="#aab" />
        <path d="M2 2h12v8H2zM2 12h4v3H2zM9 12h6v3H9z" fill="#c6c8d2" />
      </g>
    ),
  },
  {
    name: "Graphics",
    art: (
      <g>
        <path d="M0 2l3-2h13v14l-3 2H0z" fill="#2e9cdc" />
        <path d="M4 5h8v5H4zM3 12h8M13 3l-9 1" fill="none" stroke="#d4eefb" />
      </g>
    ),
  },
  {
    name: "Network agent",
    art: (
      <g>
        <path d="M0 0h16v16H0z" fill="#3f62ad" />
        <circle cx="8" cy="8" r="6" fill="#9fb4dd" />
        <path d="M4 12V7q4-4 8 0v5M6 13V8M8 13V7M10 13V8" fill="none" stroke="#3f62ad" />
      </g>
    ),
  },
  {
    name: "Globe",
    art: (
      <g>
        <circle cx="8" cy="8" r="7.500" fill="#8d8d8d" />
        <circle cx="5.500" cy="8" r="2" fill="#333" />
        <circle cx="10.500" cy="8" r="2" fill="#333" />
        <path d="M3 3q5 3 10 0M4 13q4-2 8 0" stroke="#ddd" fill="none" />
      </g>
    ),
  },
  {
    name: "Volume",
    art: (
      <g fill="none" stroke="#fff">
        <path d="M.5 5.500h2.500l3-3v11l-3-3H.5zM8.500 6q1.500 2 0 4M10.500 4q3 4 0 8" />
        <path d="M12.500 2.500q4 5.500 0 11" stroke="#777" />
      </g>
    ),
  },
  {
    name: "Battery",
    art: (
      <g fill="none" stroke="#fff">
        <path d="M5.500 4.500h9v7h-9zM.5 3v3h4V3M2.500 6v6h3M1.500 1.500V3M3.500 1.500V3" />
        <path d="M7 6h6v4H7z" fill="#fff" stroke="none" />
        <path d="M15.500 6.500v3" />
      </g>
    ),
  },
  {
    name: "Wi-Fi",
    art: (
      <g fill="none" stroke="#fff">
        <path d="M10 14.500Q10.500 11.500 14 11M7 14.500Q8 8.500 14 8" />
        <path d="M4.500 14.500Q5 5.500 14 5M1.500 14Q2 3 14 2" stroke="#aaa" />
        <circle cx="13" cy="13.500" r="1" fill="#fff" />
      </g>
    ),
  },
];

function TaskButton({ name, children, className = "" }: { name: string; children: ReactNode; className?: string }) {
  return (
    <button type="button" aria-label={name} className={`relative flex h-10 w-12 items-center justify-center ${className}`}>
      {children}
    </button>
  );
}

function Taskbar() {
  return (
    <footer className="flex h-10 shrink-0 bg-[#03060b] font-['Open_Sans','Noto_Sans',sans-serif] text-white">
      <div className="flex">
        <TaskButton name="Start">
          <svg viewBox="0 0 16 16" className="size-4" fill="#fff">
            <path d="M0 2.200L6.500 1.300v6.200H0zM7.300 1.200L16 0v7.500H7.300zM0 8.300h6.500v6.200L0 13.600zM7.300 8.300H16V16l-8.700-1.200z" />
          </svg>
        </TaskButton>
        <TaskButton name="Search">
          <svg viewBox="0 0 16 16" className="size-4" fill="none" stroke="#fff" strokeWidth="2">
            <circle cx="8" cy="8" r="6.500" />
          </svg>
        </TaskButton>
        <TaskButton name="Task view">
          <svg viewBox="0 0 20 14" className="h-[14px] w-5" fill="none" stroke="#fff">
            <path d="M4.500.5h11v13h-11zM2.500 2.500h-2v9h2M17.500 2.500h2v9h-2" />
          </svg>
        </TaskButton>
      </div>
      <div className="ml-[3px] flex gap-px">
        {APPS.map((app) => (
          <TaskButton key={app.name} name={app.name} className={app.state === "focused" ? "bg-[#333539]" : ""}>
            <svg viewBox="0 0 24 24" className="size-6">
              {app.art}
            </svg>
            {app.state === "open" && <span className="absolute inset-x-1 bottom-0 h-[2px] bg-[#76b9ed]" />}
            {app.state === "focused" && <span className="absolute inset-x-0 bottom-0 h-[2px] bg-[#76b9ed]" />}
          </TaskButton>
        ))}
      </div>
      <div className="ml-auto flex items-center">
        <div className="flex gap-2">
          {TRAY.map((item) => (
            <button key={item.name} type="button" aria-label={item.name}>
              <svg viewBox="0 0 16 16" className="size-4">
                {item.art}
              </svg>
            </button>
          ))}
        </div>
        <p className="w-[70px] text-center text-[11px] leading-[18px]">
          3:49 AM
          <br />
          11/18/2017
        </p>
        <TaskButton name="Notifications" className="-mx-[7px]">
          <svg viewBox="0 0 16 16" className="size-4" fill="none" stroke="#fff" strokeWidth="1.200">
            <path d="M.6 1h14.800v11.500H11L8 15.500l-3-3H.6z" />
          </svg>
        </TaskButton>
        <span className="mr-1 ml-[11px] h-10 w-px bg-[#4a4d52]" />
      </div>
    </footer>
  );
}

export default function App() {
  return (
    <div className="flex h-screen flex-col overflow-hidden">
      <BrowserChrome />
      <Viewport />
      <Taskbar />
    </div>
  );
}
